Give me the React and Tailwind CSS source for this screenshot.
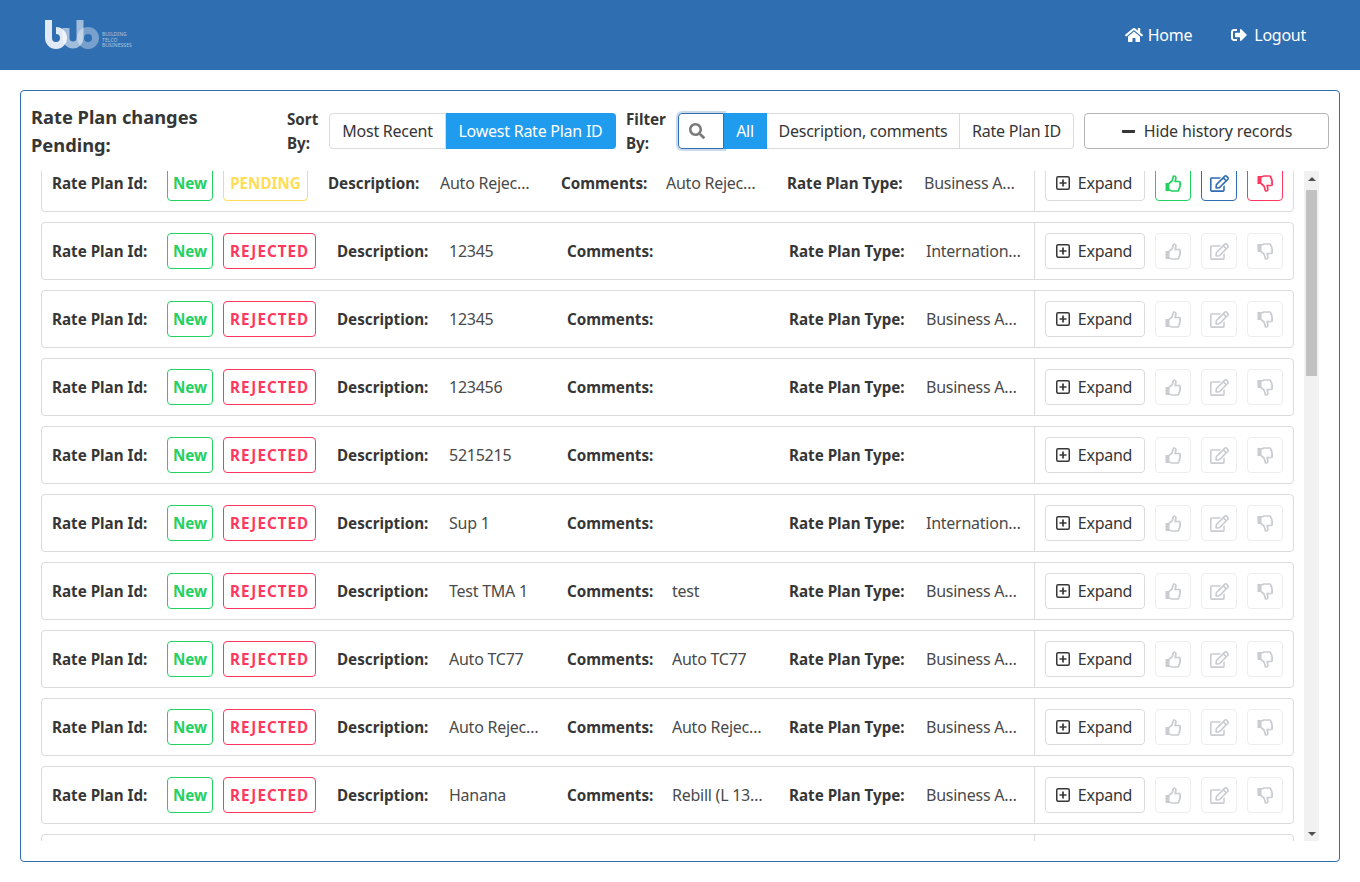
import React, { useEffect, useRef } from "react";
import { FaHome, FaSignOutAlt, FaSearch, FaMinus, FaRegEdit } from "react-icons/fa";

const visibleRows = [
  { status: "PENDING", description: "Auto Rejection TC", comments: "Auto Rejection TC", type: "Business Access" },
  { status: "REJECTED", description: "12345", comments: "", type: "International Voice" },
  { status: "REJECTED", description: "12345", comments: "", type: "Business Access" },
  { status: "REJECTED", description: "123456", comments: "", type: "Business Access" },
  { status: "REJECTED", description: "5215215", comments: "", type: "" },
  { status: "REJECTED", description: "Sup 1", comments: "", type: "International Voice" },
  { status: "REJECTED", description: "Test TMA 1", comments: "test", type: "Business Access" },
  { status: "REJECTED", description: "Auto TC77", comments: "Auto TC77", type: "Business Access" },
  { status: "REJECTED", description: "Auto Rejection TC", comments: "Auto Rejection TC", type: "Business Access" },
  { status: "REJECTED", description: "Hanana", comments: "Rebill (L 13 days)", type: "Business Access" },
];

// the list is long in the real page, only the first rows are ever seen
const rows = [
  ...visibleRows,
  ...Array.from({ length: 24 }, () => ({
    status: "REJECTED",
    description: "12345",
    comments: "",
    type: "Business Access",
  })),
];

const Logo = () => (
  <div className="flex items-center gap-[2px]">
    <svg width="55" height="30" viewBox="0 0 55 30">
      <path d="M3.5 0V18A7.5 7.5 0 1 0 11 10.5" stroke="#fff" strokeOpacity="0.85" strokeWidth="7" fill="none" />
      <path d="M21 8V18A7 7 0 0 0 35 18V0" stroke="#fff" strokeOpacity="0.55" strokeWidth="7" fill="none" />
      <circle cx="43" cy="18" r="7.5" stroke="#fff" strokeOpacity="0.35" strokeWidth="7" fill="none" />
    </svg>
    <div className="mt-[11px] text-[5px] leading-[5.5px] tracking-[0.1px] text-white/60">
      <div>BUILDING</div>
      <div>TELCO</div>
      <div>BUSINESSES</div>
    </div>
  </div>
);

const ThumbIcon = ({ down }) => (
  <svg width="16" height="17" viewBox="0 0 16 17" className={down ? "-scale-y-100" : ""}>
    <rect x="0.5" y="8" width="4" height="8" fill="currentColor" />
    <path
      d="M4 8.5 7 6 8.5 1.2C10 .5 11.2 2 10.8 3.5L10.2 6.5H14C15.5 6.5 15.6 8.5 14.8 9 15.5 10 15.3 11.3 14.6 11.6 15 12.8 14.6 13.6 13.8 14 14 15.2 13.4 16 12.5 16H7L4 15"
      fill="none"
      stroke="currentColor"
      strokeWidth="1.7"
    />
  </svg>
);

const PlusBoxIcon = () => (
  <svg width="14" height="14" viewBox="0 0 14 14" className="text-[#363636]">
    <rect x="0.75" y="0.75" width="12.5" height="12.5" rx="1.5" fill="none" stroke="currentColor" strokeWidth="1.5" />
    <path d="M7 3.5v7M3.5 7h7" stroke="currentColor" strokeWidth="1.7" />
  </svg>
);

const ToggleButton = ({ active, width, children }) => (
  <button
    className={`h-9 ${width} tracking-[-0.25px] whitespace-nowrap border border-l-0 first:border-l first:rounded-l last:rounded-r ${
      active ? "bg-[#209cee] border-[#209cee] text-white" : "bg-white border-[#dbdbdb] text-[#363636]"
    }`}
  >
    {children}
  </button>
);

const ActionButton = ({ colorClass, disabled, children }) => (
  <button
    className={`w-9 h-9 flex items-center justify-center rounded border bg-white ${
      disabled ? "border-[#eeeeee] text-[#c9ccd1]" : colorClass
    }`}
  >
    {children}
  </button>
);

const Field = ({ label, labelWidth, value, valueClass }) => (
  <>
    <span className={`${labelWidth} shrink-0 whitespace-nowrap font-bold text-[15.2px] text-[#363636]`}>{label}</span>
    <span className={`min-w-0 ml-[19px] truncate tracking-[-0.25px] text-[#4a4a4a] ${valueClass}`}>{value}</span>
  </>
);

const PlanRow = ({ row }) => {
  const pending = row.status === "PENDING";
  return (
    <div className="h-[58px] mb-[10px] flex border border-[#dbdbdb] rounded items-stretch">
      <div className="flex-1 min-w-0 flex items-center pl-[10px]">
        <span className="w-[115px] shrink-0 whitespace-nowrap font-bold text-[15.2px] text-[#363636]">Rate Plan Id:</span>
        <span className="w-[46px] h-9 shrink-0 flex items-center justify-center rounded border border-[#23d160] text-[#23d160] font-bold text-[15.2px]">
          New
        </span>
        <span
          className={`h-9 ml-[10px] shrink-0 flex items-center justify-center rounded border font-bold text-[15.2px] ${
            pending
              ? "w-[85px] mr-[20px] border-[#ffdd57] text-[#ffdd57]"
              : "w-[93px] mr-[21px] tracking-[1px] border-[#ff3860] text-[#ff3860]"
          }`}
        >
          {row.status}
        </span>
        <Field
          label="Description:"
          labelWidth="w-[93px]"
          value={row.description}
          valueClass={`w-[94px] shrink-0 ${pending ? "mr-[27px]" : "mr-[24px]"}`}
        />
        <Field
          label="Comments:"
          labelWidth="w-[86px]"
          value={row.comments}
          valueClass={`w-[94px] shrink-0 ${pending ? "mr-[27px]" : "mr-[23px]"}`}
        />
        <Field
          label="Rate Plan Type:"
          labelWidth="w-[118px]"
          value={row.type}
          valueClass={`flex-1 ${pending ? "mr-[14px]" : "mr-[10px]"}`}
        />
      </div>
      <div className="w-[259px] shrink-0 flex items-center gap-[10px] border-l border-[#dbdbdb] pl-[10px]">
        <button className="w-[100px] h-9 pr-[2px] flex items-center justify-center gap-[8px] rounded border border-[#dbdbdb] tracking-[-0.25px] text-[#363636]">
          <PlusBoxIcon />
          Expand
        </button>
        <ActionButton disabled={!pending} colorClass="border-[#23d160] text-[#23d160]">
          <ThumbIcon />
        </ActionButton>
        <ActionButton disabled={!pending} colorClass="border-[#306eb2] text-[#306eb2]">
          <FaRegEdit className="text-[19px]" />
        </ActionButton>
        <ActionButton disabled={!pending} colorClass="border-[#ff3860] text-[#ff3860]">
          <ThumbIcon down />
        </ActionButton>
      </div>
    </div>
  );
};

// chrome's default scrollbar does not show in the capture, so it is drawn
const ScrollBar = () => (
  <div className="w-[15px] shrink-0 bg-[#f1f1f1] flex flex-col items-center">
    <div className="h-[15px] flex items-center justify-center">
      <div className="w-0 h-0 border-x-[4px] border-x-transparent border-b-[4px] border-b-[#505050]" />
    </div>
    <div className="flex-1 mt-[4px]">
      <div className="w-[11px] h-[186px] bg-[#c1c1c1]" />
    </div>
    <div className="h-[15px] flex items-center justify-center">
      <div className="w-0 h-0 border-x-[4px] border-x-transparent border-t-[4px] border-t-[#505050]" />
    </div>
  </div>
);

export default function App() {
  const listRef = useRef(null);

  useEffect(() => {
    if (listRef.current) listRef.current.scrollTop = 17;
  }, []);

  return (
    <div className="min-h-[882px] bg-white font-['Noto_Sans',sans-serif] text-base text-[#363636]">
      <header className="h-[70px] bg-[#306eb2] flex items-center justify-between pl-[45px] pr-[54px]">
        <Logo />
        <nav className="flex items-center gap-[39px] text-white tracking-[-0.25px]">
          <a className="flex items-center gap-[5px]">
            <FaHome className="text-[18px]" />
            Home
          </a>
          <a className="flex items-center gap-[7px]">
            <FaSignOutAlt className="text-[16px]" />
            Logout
          </a>
        </nav>
      </header>

      <main className="p-5">
        <div className="h-[772px] border border-[#306eb2] rounded pl-[10px] flex flex-col">
          <div className="h-[80px] shrink-0 flex items-center pr-[10px]">
            <div className="w-[256px] shrink-0">
              <div className="w-[200px] text-[18.3px] leading-[28px] font-bold">Rate Plan changes Pending:</div>
            </div>
            <div className="w-[42px] shrink-0 leading-6 font-bold text-[15.2px]">Sort By:</div>
            <div className="flex">
              <ToggleButton width="w-[117px]">Most Recent</ToggleButton>
              <ToggleButton active width="w-[170px]">Lowest Rate Plan ID</ToggleButton>
            </div>
            <div className="w-[42px] ml-[10px] mr-[10px] shrink-0 leading-6 font-bold text-[15.2px]">Filter By:</div>
            <div className="flex">
              <div className="w-[46px] h-9 flex items-center pl-[10px] rounded-l border border-[#306eb2] shadow-[0_0_0_2px_rgba(48,110,178,0.25)] text-[#7a7a7a]">
                <FaSearch />
              </div>
              <ToggleButton active width="w-[43px] !rounded-none !border-l-0">All</ToggleButton>
              <ToggleButton width="w-[193px]">Description, comments</ToggleButton>
              <ToggleButton width="w-[114px]">Rate Plan ID</ToggleButton>
            </div>
            <button className="ml-[10px] w-[245px] h-9 flex items-center justify-center gap-[8px] rounded border border-[#b5b5b5] tracking-[-0.15px] text-[#363636]">
              <FaMinus className="text-[15px]" />
              Hide history records
            </button>
          </div>

          <div className="h-[670px] shrink-0 flex mr-[20px]">
            <div ref={listRef} className="flex-1 min-w-0 overflow-hidden px-[10px]">
              {rows.map((row, i) => (
                <PlanRow key={i} row={row} />
              ))}
            </div>
            <ScrollBar />
          </div>
        </div>
      </main>
    </div>
  );
}
